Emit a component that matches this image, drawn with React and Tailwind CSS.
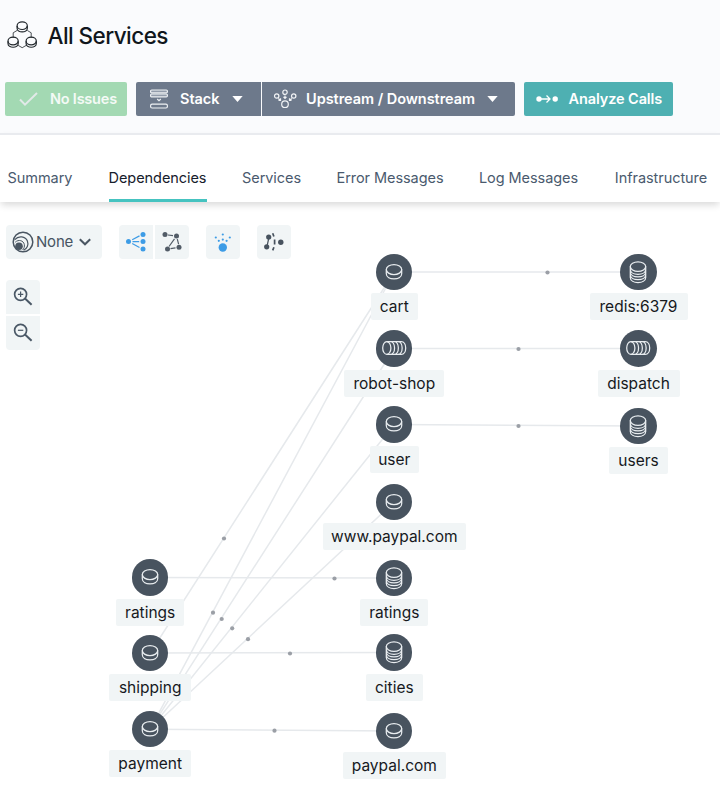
import React from "react";

const NODES = [
  { x: 150.2, y: 577.5, w: 68, label: "ratings", kind: "service" },
  { x: 150.2, y: 653, w: 82, label: "shipping", kind: "service" },
  { x: 150.2, y: 729.2, w: 82, label: "payment", kind: "service" },
  { x: 394.3, y: 272, w: 47, label: "cart", kind: "service" },
  { x: 394.3, y: 348.5, w: 100, label: "robot-shop", kind: "queue" },
  { x: 394.3, y: 424.5, w: 49, label: "user", kind: "service" },
  { x: 394.3, y: 502, w: 143, label: "www.paypal.com", kind: "service" },
  { x: 394.3, y: 578, w: 68, label: "ratings", kind: "database" },
  { x: 394.3, y: 652.5, w: 57, label: "cities", kind: "database" },
  { x: 394.3, y: 731, w: 103, label: "paypal.com", kind: "service" },
  { x: 638.5, y: 272, w: 98, label: "redis:6379", kind: "database" },
  { x: 638.5, y: 348.5, w: 82, label: "dispatch", kind: "queue" },
  { x: 638.5, y: 426, w: 59, label: "users", kind: "database" },
];

const EDGES = [
  [3, 10, 547.5, 272.5], [4, 11, 518.5, 349], [5, 12, 518.5, 426],
  [0, 7, 334.5, 578.5], [1, 8, 290, 653.5], [2, 9, 274.5, 730.7],
  [1, 3, 224, 538.5], [2, 3, 213, 612.7], [2, 4, 221.7, 619],
  [2, 5, 232.2, 628.3], [2, 6, 248, 639.2],
];

const CANVAS_TOP = 204;

function NodeIcon({ kind }) {
  return (
    <svg className="h-9 w-9" viewBox="-18 -18 36 36" fill="none" stroke="#e9edf0" strokeWidth="1.25">
      {kind === "service" && (
        <>
          <ellipse cy="-2.4" rx="7.7" ry="5" />
          <path d="M-7.7-2.4v4.2c0 6.8 15.4 6.8 15.4 0v-4.2" />
        </>
      )}
      {kind === "database" && (
        <>
          <ellipse cy="-5.4" rx="7.7" ry="4.8" />
          <path d="M-7.7-5.4V5.5c0 6.8 15.4 6.8 15.4 0V-5.4M-7.7-2.6c0 6.5 15.4 6.5 15.4 0M-7.7 0c0 6.5 15.4 6.5 15.4 0M-7.7 2.7c0 6.5 15.4 6.5 15.4 0" />
        </>
      )}
      {kind === "queue" && (
        <>
          <ellipse cx="-7.2" rx="4.1" ry="6.4" />
          <path d="M-7.2-6.4H7.2c6 0 6 12.8 0 12.8H-7.2M-3.8-6.4c5.8 0 5.8 12.8 0 12.8M0-6.4c5.8 0 5.8 12.8 0 12.8M3.8-6.4c5.8 0 5.8 12.8 0 12.8" />
        </>
      )}
    </svg>
  );
}

function GraphNode({ node }) {
  return (
    <div
      className="absolute flex flex-col items-center gap-[3px]"
      style={{ left: node.x - node.w / 2, top: node.y - 18.2 - CANVAS_TOP, width: node.w }}
    >
      <div className="flex h-[36.4px] w-[36.4px] items-center justify-center rounded-full bg-[#48535f]">
        <NodeIcon kind={node.kind} />
      </div>
      <div className="flex h-[27px] w-full items-center justify-center rounded-[2px] bg-[#f1f5f6] text-[15.5px] whitespace-nowrap text-[#16191d]">
        {node.label}
      </div>
    </div>
  );
}

function Graph() {
  return (
    <div className="absolute inset-0">
      <svg className="absolute inset-0 h-full w-full" viewBox="0 204 720 588">
        {EDGES.map(([a, b]) => (
          <line key={`${a}-${b}`} x1={NODES[a].x} y1={NODES[a].y} x2={NODES[b].x} y2={NODES[b].y} stroke="#e6e9ec" strokeWidth="1.5" />
        ))}
        {EDGES.map(([a, b, x, y]) => (
          <circle key={`${a}-${b}`} cx={x} cy={y} r="2.1" fill="#9b9fa6" />
        ))}
      </svg>
      {NODES.map((node, i) => <GraphNode key={i} node={node} />)}
    </div>
  );
}

function Caret() {
  return <svg className="h-[6px] w-[11px]" viewBox="0 0 11 6"><path d="M.3 0h10.4L5.5 6z" fill="#fff" /></svg>;
}

function Puck({ x, y }) {
  return (
    <g transform={`translate(${x} ${y})`}>
      <ellipse cy="-1.3" rx="5.1" ry="3.8" fill="none" />
      <path d="M-5.1-1.1v2.3c0 5 10.2 5 10.2 0v-2.3" />
    </g>
  );
}

function Header() {
  return (
    <header className="flex h-[133px] flex-col bg-[#fafbfd]">
      <div className="flex h-[70px] items-center gap-[10.5px] pl-[7px]">
        <svg className="h-[30px] w-[30px]" viewBox="7 20 30 30" fill="none" stroke="#20262b" strokeWidth="1.2">
          <Puck x="22.2" y="27" />
          <Puck x="13.1" y="42.3" />
          <Puck x="31.2" y="42.3" />
          <path strokeWidth=".8" d="M17 30.5l-3.8 2.3v5M27.4 30.5l3.8 2.3v5M18.2 45.4l4 2.3 4-2.3" />
        </svg>
        <h1 className="pt-px text-[22.5px] font-medium tracking-[-0.55px] whitespace-nowrap text-[#10161c]">All Services</h1>
      </div>
      <div className="flex h-[57px] items-center pl-[5px] text-[14.5px] font-semibold tracking-[-0.04px] whitespace-nowrap text-white">
        <div className="flex h-[34px] w-[122px] items-center rounded-[2px] bg-[#a3d9b3] pl-[14px]">
          <svg className="mr-[12px] h-[16px] w-[19px]" viewBox="0 0 19 16" fill="none" stroke="#e2e9e8" strokeWidth="2"><path d="M1 8.5l5 5.2L18 2" /></svg>
          <span className="tracking-[-0.22px] text-[#f4faf6]">No Issues</span>
        </div>
        <div className="ml-[9px] flex h-[34px] w-[125px] items-center rounded-l-[2px] bg-[#6d798b] pl-[14px]">
          <svg className="mr-[12px] h-[20px] w-[18px]" viewBox="0 0 18 20" fill="none" stroke="#eef1f4" strokeWidth="1.2">
            <rect x=".6" y="1" width="16.8" height="2.8" rx="1.1" fill="#929cab" />
            <rect x=".6" y="5" width="16.8" height="2.8" rx="1.1" fill="#929cab" />
            <path d="M7.2 10l1.8 1.7L10.8 10" />
            <rect x=".6" y="15.2" width="16.8" height="3.8" rx="1.5" />
          </svg>
          <span className="mr-[12.5px]">Stack</span>
          <Caret />
        </div>
        <div className="ml-px flex h-[34px] w-[253px] items-center rounded-r-[2px] bg-[#6d798b] pl-[11px]">
          <svg className="mr-[9px] h-[22px] w-[24px]" viewBox="0 0 24 22" fill="none" stroke="#f2f4f6" strokeWidth="1.2">
            <circle cx="3.7" cy="8" r="2.2" /><circle cx="12" cy="4.2" r="2.2" /><circle cx="20.7" cy="8" r="2.2" /><circle cx="12" cy="16.2" r="3.3" />
            <path d="M5.3 10.5L7 11.9M5.5 12.3h2v-2M12 7.5v3M10.5 8.8l1.5 1.5 1.5-1.5M18.8 10.5l-1.7 1.4M18.5 12.3h-2v-2" />
          </svg>
          <span className="mr-[11.5px]">Upstream / Downstream</span>
          <Caret />
        </div>
        <div className="ml-[9px] flex h-[34px] w-[149px] items-center rounded-[2px] bg-[#4eb0b2] pl-[12px]">
          <svg className="mr-[10.5px] h-[10px] w-[22px]" viewBox="0 0 22 10" fill="none" stroke="#fff" strokeWidth="1.3">
            <circle cx="3" cy="5" r="2.7" fill="#fff" stroke="none" /><circle cx="19.2" cy="5" r="2.7" fill="#fff" stroke="none" />
            <path d="M3 5h11M10.5 1.5L14 5l-3.5 3.5" />
          </svg>
          <span className="tracking-[-0.1px]">Analyze Calls</span>
        </div>
      </div>
    </header>
  );
}

const TABS = [
  ["Summary", "w-[65px] mr-[36px]"], ["Dependencies", "w-[98px] mr-[36px]"], ["Services", "w-[58px] mr-[36px]"],
  ["Error Messages", "w-[107px] mr-[36px]"], ["Log Messages", "w-[98px] mr-[37px]"], ["Infrastructure", "w-[93px]"],
];

function Tabs() {
  return (
    <nav className="relative z-10 flex h-[69px] border-t-2 border-[#e9ebef] bg-white pl-[7.5px] text-[14.5px] tracking-[-0.06px] whitespace-nowrap shadow-[0_4px_7px_-1px_rgba(0,0,0,0.15)]">
      {TABS.map(([name, box]) => (
        <div
          key={name}
          className={`${box} flex items-center justify-center border-b-[3px] pt-[22px] ${name === "Dependencies" ? "border-[#45c3c0] text-[#16202b]" : "border-transparent text-[#4a5a6e]"}`}
        >
          {name}
        </div>
      ))}
    </nav>
  );
}

function Tool({ children, className = "" }) {
  return <button className={`flex h-[34px] w-[34px] items-center justify-center bg-[#f1f5f6] ${className}`}>{children}</button>;
}

function Zoom({ plus }) {
  return (
    <svg className="h-[34px] w-[34px]" viewBox="0 0 34 34" fill="none" stroke="#4a5866">
      <circle cx="14.6" cy="14.3" r="6" strokeWidth="1.7" />
      <path d="M19 18.6l6.6 6.2" strokeWidth="2" />
      <path d={plus ? "M11.9 14.3h5.4M14.6 11.6V17" : "M11.9 14.3h5.4"} strokeWidth="1.2" />
    </svg>
  );
}

function Toolbar() {
  return (
    <div className="relative flex w-[300px] flex-col gap-[21px] pt-[21px] pl-[6px]">
      <div className="flex">
        <button className="flex h-[34px] w-[96px] items-center rounded-[4px] bg-[#f1f5f6] pl-[6px] text-[15px] tracking-[-0.2px] text-[#475462]">
          <svg className="mr-[2px] h-[22px] w-[22px]" viewBox="0 0 22 22" fill="none" stroke="#4a5662">
            <circle cx="11" cy="11" r="9.8" strokeWidth="1.5" />
            <path d="M2.8 8.6C6.5 4.3 13.5 5.2 15.4 10c1.4 3.8-.3 7.6-3.8 9.2" strokeWidth="1.2" />
            <path d="M3.2 11.2c3.4-3.2 8.3-1.6 9.1 2.2.4 2.2-.3 4.2-1.7 5.6" strokeWidth="1" />
            <circle cx="7" cy="15.2" r="3.8" fill="#4a5662" stroke="none" />
          </svg>
          None
          <svg className="ml-[6px] h-[8px] w-[12px]" viewBox="0 0 12 8" fill="none" stroke="#4a5662" strokeWidth="2"><path d="M.8 1.2L6 6.3l5.2-5.1" /></svg>
        </button>
        <Tool className="ml-[17px] rounded-l-[4px]">
          <svg className="h-[34px] w-[34px]" viewBox="0 0 34 34" fill="#3d9ce6" stroke="#3d9ce6" strokeWidth="1.2">
            <path d="M13.2 14.8l7.3-3.9M13.5 16.6h6.7M13.2 18.5l7.3 4" />
            <g stroke="none"><circle cx="9.5" cy="16.6" r="2.5" /><circle cx="24" cy="9.6" r="2.5" /><circle cx="24" cy="16.6" r="2.5" /><circle cx="24" cy="24" r="2.5" /></g>
          </svg>
        </Tool>
        <Tool className="ml-[2px] rounded-r-[4px]">
          <svg className="h-[34px] w-[34px]" viewBox="0 0 34 34" fill="#525c67" stroke="#525c67" strokeWidth="1.2">
            <path d="M13 10l5 .7M19.5 13.8L14 21.5M22.3 14.2l1.3 5M15.5 23.7l5-.8" />
            <g stroke="none"><circle cx="10" cy="9.6" r="2.5" /><circle cx="21.5" cy="11" r="2.5" /><circle cx="12.5" cy="24" r="2.5" /><circle cx="24" cy="22.3" r="2.5" /></g>
          </svg>
        </Tool>
        <Tool className="ml-[17px] rounded-[4px]">
          <svg className="h-[34px] w-[34px]" viewBox="0 0 34 34" fill="#3d9ce6">
            <circle cx="16.8" cy="22.5" r="4.2" /><circle cx="16.8" cy="9.5" r="1.1" /><circle cx="16.8" cy="14.6" r="1.1" /><circle cx="9.8" cy="12.5" r="1.1" /><circle cx="12.8" cy="15.8" r="1.1" /><circle cx="20.6" cy="15.8" r="1.1" /><circle cx="23.8" cy="12.5" r="1.1" />
          </svg>
        </Tool>
        <Tool className="ml-[17px] rounded-[4px]">
          <svg className="h-[34px] w-[34px]" viewBox="0 0 34 34" fill="#47525e" stroke="#47525e">
            <g stroke="none"><circle cx="11.7" cy="12" r="2.6" /><circle cx="9.7" cy="21.8" r="2.6" /><circle cx="23.8" cy="17.3" r="2.7" /></g>
            <path d="M11.7 13.5L10.3 20" strokeWidth="1.2" />
            <path d="M15.7 8.3l1.2 3.2M17.6 14.5v5M16.9 22.2l-1.2 3.2" strokeWidth="1.7" fill="none" />
          </svg>
        </Tool>
      </div>
      <div className="flex flex-col gap-[2px]">
        <Tool className="rounded-t-[4px]"><Zoom plus /></Tool>
        <Tool className="rounded-b-[4px]"><Zoom /></Tool>
      </div>
    </div>
  );
}

export default function App() {
  return (
    <div className="flex h-[792px] w-[720px] flex-col overflow-hidden bg-white font-['Inter','Liberation_Sans',sans-serif]">
      <Header />
      <Tabs />
      <main className="relative mt-[2px] min-h-0 flex-1">
        <Graph />
        <Toolbar />
      </main>
    </div>
  );
}
